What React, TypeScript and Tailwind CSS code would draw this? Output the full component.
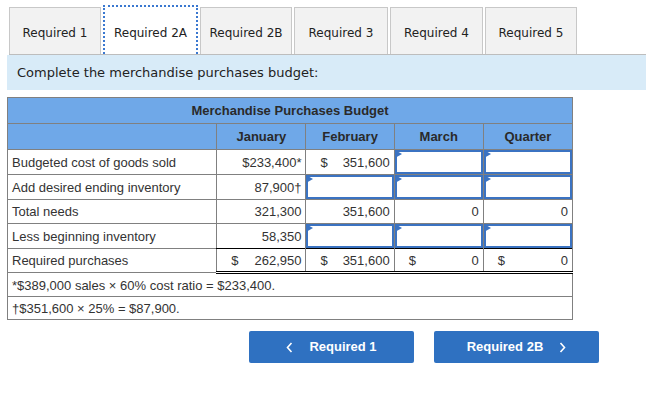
import React from 'react'

const tabs = [
  { label: 'Required 1', w: 'w-[92px]' },
  { label: 'Required 2A', w: 'w-[95px]', active: true },
  { label: 'Required 2B', w: 'w-[92px]' },
  { label: 'Required 3', w: 'w-[94px]' },
  { label: 'Required 4', w: 'w-[93px]' },
  { label: 'Required 5', w: 'w-[92px]' },
]

function Input() {
  return (
    <td className="p-0 border border-[#808080]">
      <div className="relative h-[24px] border-2 border-[#3b73c2] bg-white">
        <span className="absolute -top-[2px] -left-[2px] w-0 h-0 border-y-[4px] border-y-transparent border-l-[7px] border-l-[#3b73c2]" />
      </div>
    </td>
  )
}

function Num({ v, dollar, total }: { v: string; dollar?: boolean; total?: 'top' | 'final' }) {
  const t =
    total === 'final'
      ? 'border-t border-t-black border-b-[3px] border-b-black border-double'
      : total === 'top'
        ? 'border-t border-t-black'
        : ''
  return (
    <td className={`border border-[#808080] px-[4px] ${t}`}>
      <div className="flex justify-between">
        <span className="pl-[10px]">{dollar ? '$' : ''}</span>
        <span>{v}</span>
      </div>
    </td>
  )
}

function Label({ text }: { text: string }) {
  return <td className="border border-[#808080] pl-[4px] text-left">{text}</td>
}

export default function App() {
  return (
    <div className="w-[646px] h-[419px] bg-white text-[#222]">
      {/* tabs */}
      <div className="ml-[9px] pt-[7px] flex gap-[2px] border-b border-[#bdbdbd] font-['DejaVu_Sans',sans-serif] text-[12px]">
        {tabs.map((t) =>
          t.active ? (
            <div
              key={t.label}
              className={`${t.w} h-[49px] -mt-[2px] -mb-px pt-[4px] flex items-center justify-center bg-white border-2 border-dotted border-[#3a78d0] border-b-0 text-[#222]`}
            >
              {t.label}
            </div>
          ) : (
            <div
              key={t.label}
              className={`${t.w} h-[47px] pt-[3px] flex items-center justify-center bg-[#f2f2f2] border border-b-0 border-[#c8c8c8] text-[#222]`}
            >
              {t.label}
            </div>
          ),
        )}
      </div>

      {/* instructions */}
      <div className="ml-[7px] h-[35px] bg-[#d8ebf8] flex items-center pl-[10px] font-['DejaVu_Sans',sans-serif] text-[13px] text-[#222]">
        Complete the merchandise purchases budget:
      </div>

      {/* budget table */}
      <table className="ml-[7px] mt-[7px] w-[566px] table-fixed border-collapse font-['Liberation_Sans',Arial,sans-serif] text-[13px] text-[#333] [&_td]:h-[24px] [&_td]:leading-none">
        <colgroup>
          <col className="w-[209px]" />
          <col className="w-[89px]" />
          <col className="w-[88px]" />
          <col className="w-[89px]" />
          <col className="w-[89px]" />
        </colgroup>
        <tbody>
          <tr className="bg-[#6fa8e8] font-bold text-[#2a2a2a]">
            <td colSpan={5} className="border border-[#808080] text-center !h-[26px]">
              Merchandise Purchases Budget
            </td>
          </tr>
          <tr className="bg-[#6fa8e8] font-bold text-[#2a2a2a]">
            <td className="border border-[#808080] !h-[26px]"></td>
            <td className="border border-[#808080] text-center">January</td>
            <td className="border border-[#808080] text-center">February</td>
            <td className="border border-[#808080] text-center">March</td>
            <td className="border border-[#808080] text-center">Quarter</td>
          </tr>
          <tr>
            <Label text="Budgeted cost of goods sold" />
            <Num v="$233,400*" />
            <Num v="351,600" dollar />
            <Input />
            <Input />
          </tr>
          <tr>
            <Label text="Add desired ending inventory" />
            <Num v="87,900†" />
            <Input />
            <Input />
            <Input />
          </tr>
          <tr>
            <Label text="Total needs" />
            <Num v="321,300" total="top" />
            <Num v="351,600" total="top" />
            <Num v="0" total="top" />
            <Num v="0" total="top" />
          </tr>
          <tr>
            <Label text="Less beginning inventory" />
            <Num v="58,350" />
            <Input />
            <Input />
            <Input />
          </tr>
          <tr>
            <Label text="Required purchases" />
            <Num v="262,950" dollar total="final" />
            <Num v="351,600" dollar total="final" />
            <Num v="0" dollar total="final" />
            <Num v="0" dollar total="final" />
          </tr>
          <tr>
            <td colSpan={5} className="border border-[#808080] pl-[4px] !h-[24px]">
              *$389,000 sales × 60% cost ratio = $233,400.
            </td>
          </tr>
          <tr>
            <td colSpan={5} className="border border-[#808080] pl-[4px] !h-[23px]">
              †$351,600 × 25% = $87,900.
            </td>
          </tr>
        </tbody>
      </table>

      {/* navigation */}
      <div className="ml-[249px] mt-[11px] flex gap-[20px] font-['Liberation_Sans',Arial,sans-serif] text-[13px] font-bold text-white">
        <button className="w-[165px] h-[32px] rounded-[2px] bg-[#2f71c1] flex items-center justify-center gap-[16px]">
          <svg width="7" height="11" viewBox="0 0 7 11" fill="none" stroke="white" strokeWidth="1.6">
            <path d="M5.5 1 1.5 5.5 5.5 10" />
          </svg>
          <span>Required 1</span>
        </button>
        <button className="w-[165px] h-[32px] rounded-[2px] bg-[#2f71c1] flex items-center justify-center gap-[16px]">
          <span>Required 2B</span>
          <svg width="7" height="11" viewBox="0 0 7 11" fill="none" stroke="white" strokeWidth="1.6">
            <path d="M1.5 1 5.5 5.5 1.5 10" />
          </svg>
        </button>
      </div>
    </div>
  )
}
